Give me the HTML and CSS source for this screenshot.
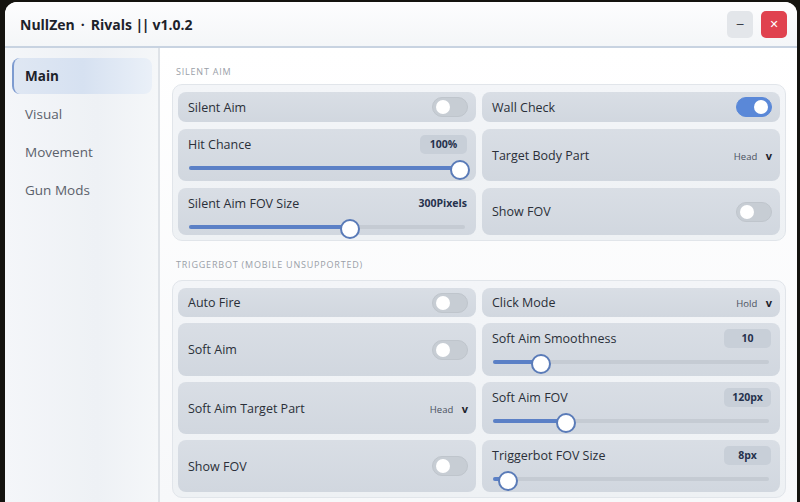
FILE: index.html
```html
<!DOCTYPE html>
<html lang="en">
<head>
    <meta charset="UTF-8">
    <meta name="viewport" content="width=device-width, initial-scale=1.0">
    <title>NullZen Rivals</title>
    <link rel="stylesheet" href="styles.css">
</head>
<body>
    <div class="window">
        <div class="titlebar">
            <div class="title">NullZen<span class="dot">·</span>Rivals <span class="bars">||</span> v1.0.2</div>
            <div class="win-buttons">
                <button class="win-btn min">&minus;</button>
                <button class="win-btn close">&#x2715;</button>
            </div>
        </div>

        <div class="body">
            <nav class="sidebar">
                <div class="nav-item active">Main</div>
                <div class="nav-item">Visual</div>
                <div class="nav-item">Movement</div>
                <div class="nav-item">Gun Mods</div>
            </nav>

            <main class="content">
                <div class="section-label">Silent Aim</div>
                <div class="group group-silent">
                    <div class="card row-card">
                        <span>Silent Aim</span>
                        <span class="toggle"></span>
                    </div>
                    <div class="card row-card">
                        <span>Wall Check</span>
                        <span class="toggle on"></span>
                    </div>

                    <div class="card slider-card">
                        <div class="slider-head">
                            <span>Hit Chance</span>
                            <span class="badge">100%</span>
                        </div>
                        <div class="track"><div class="fill" style="width: 99%"></div></div>
                    </div>
                    <div class="card row-card">
                        <span>Target Body Part</span>
                        <span class="dropdown">Head <b>v</b></span>
                    </div>

                    <div class="card slider-card">
                        <div class="slider-head">
                            <span>Silent Aim FOV Size</span>
                            <span class="badge plain">300Pixels</span>
                        </div>
                        <div class="track"><div class="fill" style="width: 59%"></div></div>
                    </div>
                    <div class="card row-card">
                        <span>Show FOV</span>
                        <span class="toggle"></span>
                    </div>
                </div>

                <div class="section-label trigger-label">Triggerbot (Mobile Unsupported)</div>
                <div class="group group-trigger">
                    <div class="card row-card">
                        <span>Auto Fire</span>
                        <span class="toggle"></span>
                    </div>
                    <div class="card row-card">
                        <span>Click Mode</span>
                        <span class="dropdown">Hold <b>v</b></span>
                    </div>

                    <div class="card row-card">
                        <span>Soft Aim</span>
                        <span class="toggle"></span>
                    </div>
                    <div class="card slider-card">
                        <div class="slider-head">
                            <span>Soft Aim Smoothness</span>
                            <span class="badge">10</span>
                        </div>
                        <div class="track"><div class="fill" style="width: 18%"></div></div>
                    </div>

                    <div class="card row-card">
                        <span>Soft Aim Target Part</span>
                        <span class="dropdown">Head <b>v</b></span>
                    </div>
                    <div class="card slider-card">
                        <div class="slider-head">
                            <span>Soft Aim FOV</span>
                            <span class="badge">120px</span>
                        </div>
                        <div class="track"><div class="fill" style="width: 27%"></div></div>
                    </div>

                    <div class="card row-card">
                        <span>Show FOV</span>
                        <span class="toggle"></span>
                    </div>
                    <div class="card slider-card">
                        <div class="slider-head">
                            <span>Triggerbot FOV Size</span>
                            <span class="badge">8px</span>
                        </div>
                        <div class="track"><div class="fill" style="width: 6%"></div></div>
                    </div>
                </div>
            </main>
        </div>
    </div>
</body>
</html>
```

FILE: styles.css
```css
* {
    box-sizing: border-box;
}

body {
    margin: 0;
    background-color: #14130f;
    font-family: "Open Sans", "Noto Sans", sans-serif;
    color: #2a2f38;
    overflow: hidden;
}

.window {
    margin: 2px 3px 0 5px;
    height: 500px;
    border-radius: 12px 12px 0 0;
    background: linear-gradient(180deg, #fafbfc 0%, #f1f3f6 100%);
    display: flex;
    flex-direction: column;
    overflow: hidden;
}

.titlebar {
    height: 46px;
    flex: 0 0 46px;
    display: flex;
    align-items: center;
    justify-content: space-between;
    padding: 0 10px 0 15px;
    border-bottom: 2px solid #c8d3e1;
    background: linear-gradient(180deg, #fdfdfe, #f4f6f8);
}

.title {
    font-size: 14px;
    font-weight: 700;
    color: #1d222b;
}

.title .dot {
    margin: 0 6px;
}

.title .bars {
    letter-spacing: -1.5px;
    margin-right: 1px;
}

.win-buttons {
    display: flex;
    gap: 8px;
}

.win-btn {
    width: 26px;
    height: 27px;
    border: none;
    border-radius: 5px;
    font-family: "DejaVu Sans", sans-serif;
    font-size: 11px;
    padding: 0;
}

.win-btn.min {
    background-color: #e3e6ea;
    color: #3a3f48;
}

.win-btn.close {
    background-color: #e0424f;
    color: #ffffff;
    font-weight: 700;
}

.body {
    flex: 1;
    display: flex;
    min-height: 0;
}

.sidebar {
    width: 155px;
    flex: 0 0 155px;
    padding: 10px 6px 0 7px;
    border-right: 2px solid #dfe3e8;
    background: linear-gradient(90deg, #f4f6f9, #eef1f5 60%, #f5f7f9);
    display: flex;
    flex-direction: column;
    gap: 2.5px;
}

.nav-item {
    height: 35.5px;
    display: flex;
    align-items: center;
    padding-left: 13px;
    font-size: 13.5px;
    color: #5b616b;
    border-radius: 8px;
}

.nav-item.active {
    color: #1d222b;
    font-weight: 700;
    background: linear-gradient(90deg, #dfe7f3, #d6e1f1 50%, #eaf0f8);
    border-left: 2px solid #7d9bd0;
    padding-left: 11px;
}

.content {
    flex: 1;
    padding: 17px 11px 0 12px;
    background: linear-gradient(180deg, #ffffff, #f7f8fa);
}

.section-label {
    font-size: 9px;
    letter-spacing: 0.8px;
    text-transform: uppercase;
    color: #9aa0a8;
    padding-left: 4px;
    height: 12px;
    margin-bottom: 7px;
}

.section-label.trigger-label {
    margin-bottom: 10px;
}

.group {
    display: grid;
    grid-template-columns: 1fr 1fr;
    column-gap: 6px;
    padding: 7px 5px 5px;
    border: 1px solid #e1e5ea;
    border-radius: 10px;
    background: linear-gradient(180deg, #f3f5f8, #eef1f4);
}

.group-silent {
    grid-template-rows: 30px 52px 47px;
    row-gap: 7px;
    margin-bottom: 17px;
}

.group-trigger {
    grid-template-rows: 29px 53px 52px 52px;
    row-gap: 6px;
}

.card {
    background: linear-gradient(180deg, #d9dee5, #d1d7df);
    border-radius: 8px;
    font-size: 12.5px;
}

.row-card {
    display: flex;
    align-items: center;
    justify-content: space-between;
    padding: 0 8px 0 10px;
}

.slider-card {
    padding: 5px 9px 0 10px;
}

.slider-head {
    display: flex;
    align-items: center;
    justify-content: space-between;
    height: 20px;
}

.badge {
    min-width: 47px;
    height: 19px;
    line-height: 19px;
    text-align: center;
    border-radius: 5px;
    background-color: #c8cfd8;
    color: #26324d;
    font-size: 10.5px;
    font-weight: 700;
    padding: 0 6px;
}

.badge.plain {
    background: none;
    padding: 0;
}

.track {
    position: relative;
    height: 4px;
    margin: 12px 2px 0 1px;
    border-radius: 2px;
    background-color: #c5cbd3;
}

.fill {
    height: 100%;
    border-radius: 2px;
    background-color: #5b80c6;
    position: relative;
}

.fill::after {
    content: "";
    position: absolute;
    right: -8px;
    top: -6px;
    width: 16px;
    height: 16px;
    border-radius: 50%;
    background-color: #ffffff;
    border: 2px solid #5a7bb8;
}

.toggle {
    position: relative;
    width: 36px;
    height: 20px;
    border-radius: 10px;
    background-color: #c7cdd4;
    border: 1px solid #bfc5cc;
}

.toggle::after {
    content: "";
    position: absolute;
    left: 3px;
    top: 2px;
    width: 14px;
    height: 14px;
    border-radius: 50%;
    background-color: #ffffff;
}

.toggle.on {
    background-color: #5a88d8;
    border-color: #5a88d8;
}

.toggle.on::after {
    left: auto;
    right: 3px;
}

.dropdown {
    font-size: 9.5px;
    color: #4a5160;
}

.dropdown b {
    font-size: 11px;
    color: #1d222b;
    margin-left: 6px;
}
```
